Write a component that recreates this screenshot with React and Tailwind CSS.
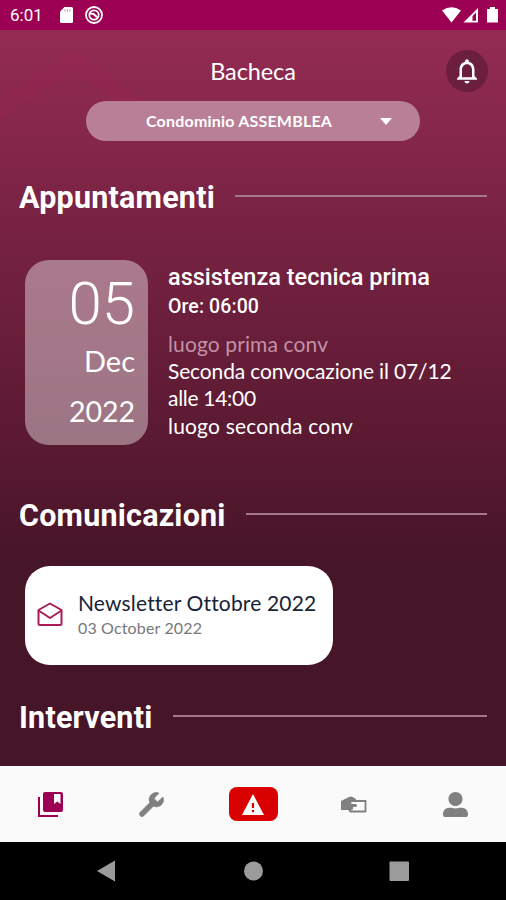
import React from 'react';
import { MdNotificationsNone } from 'react-icons/md';
import { FaUserAlt } from 'react-icons/fa';
import { Wrench } from 'lucide-react';

function StatusBar() {
  return (
    <div className="flex h-[30px] shrink-0 items-center justify-between bg-[#9c0052] pr-2 pl-[10px] text-white">
      <div className="flex items-center">
        <span className="w-[50px] pt-px font-['Roboto',sans-serif] text-[17px] leading-none">6:01</span>
        <svg className="h-4 w-[13px]" viewBox="0 0 13 16" fill="currentColor">
          <path d="M4.500 0H11.500Q13 0 13 1.500V14.500Q13 16 11.500 16H1.500Q0 16 0 14.500V4.500Z" />
          <path d="M5 2.500v2M7.500 2.500v2M10 2.500v2" stroke="#c9729f" strokeWidth="1" />
        </svg>
        <svg className="ml-3 h-[18px] w-[18px]" viewBox="0 0 18 18" fill="none" stroke="currentColor">
          <circle cx="9" cy="9" r="8" strokeWidth="1.800" />
          <circle cx="9" cy="9" r="4.700" strokeWidth="1.700" />
          <path d="M5 7.500L8.500 8L13 12" strokeWidth="2" />
        </svg>
      </div>
      <svg className="h-4 w-14" viewBox="0 0 56 16" fill="currentColor">
        <path d="M0 3.500Q9.500 -3 19 3.500L9.500 15.500Z" />
        <path d="M21.500 15.500L36 1V15.500Z" />
        <path d="M30.500 9L34 5.500V13.800H30.500Z" fill="#9c0052" />
        <path d="M45 2H48V0H53V2H56V15.500H45Z" />
      </svg>
    </div>
  );
}

function SectionTitle({ children, className }) {
  return (
    <div className="flex h-[35px] items-center pr-[19px] pl-[19px]">
      <h2 className={`shrink-0 pb-px font-['Roboto',sans-serif] text-[30.500px] leading-[34px] font-bold tracking-[0.2px] ${className}`}>
        {children}
      </h2>
      <div className="mb-[5px] h-[2px] flex-1 bg-[#a3788a]"></div>
    </div>
  );
}

function Appointment() {
  return (
    <div className="mt-11 flex pl-[25px]">
      <div className="h-[185px] w-[123px] shrink-0 rounded-[24px] bg-white/40 pr-[13px] text-right">
        <div className="mt-3 font-['Roboto',sans-serif] text-[60px] leading-[64px] font-light">05</div>
        <div className="mt-1 text-[29px] leading-[42px]">Dec</div>
        <div className="mt-2 text-[28.500px] leading-[42px]">2022</div>
      </div>
      <div className="pl-5">
        <h3 className="mt-[3px] font-['Roboto',sans-serif] text-[23.500px] leading-[28px] font-medium whitespace-nowrap">
          assistenza tecnica prima
        </h3>
        <p className="mt-px font-['Roboto',sans-serif] text-[19.500px] leading-[30px] font-medium tracking-[0.1px]">Ore: 06:00</p>
        <div className="mt-[8px] text-[21px] leading-[27.200px] whitespace-nowrap">
          <p className="tracking-[0.12px] text-[#c391a7]">luogo prima conv</p>
          <p className="tracking-[-0.15px]">Seconda convocazione il 07/12</p>
          <p className="tracking-[-0.3px]">alle 14:00</p>
          <p className="tracking-[0.18px]">luogo seconda conv</p>
        </div>
      </div>
    </div>
  );
}

function NewsCard() {
  return (
    <div className="mt-8 ml-[25px] flex h-[99px] w-[308px] items-center rounded-[25px] bg-white">
      <svg className="mb-1 ml-3 h-6 w-[26px] shrink-0" viewBox="0 0 26 24" fill="none" stroke="#a91b57" strokeWidth="2" strokeLinejoin="round">
        <path d="M1.500 8L13 1.500L24.500 8V21.500Q24.500 23 23 23H3Q1.500 23 1.500 21.500Z" />
        <path d="M1.500 8.500L13 16L24.500 8.500" />
      </svg>
      <div className="mb-px ml-[15px] whitespace-nowrap">
        <p className="text-[21px] leading-[26px] tracking-[0.16px] text-[#172337]">Newsletter Ottobre 2022</p>
        <p className="text-[16px] leading-6 tracking-[0.15px] text-[#77777b]">03 October 2022</p>
      </div>
    </div>
  );
}

function BottomTabs() {
  return (
    <nav className="flex h-[76px] shrink-0 items-center bg-[#fafafa] text-[#808080]">
      <div className="flex flex-1 justify-center">
        <svg className="h-[25px] w-[25px]" viewBox="0 0 25 25" fill="#9c0052">
          <path d="M1 5V24H20" fill="none" stroke="#9c0052" strokeWidth="2" />
          <path d="M7 0H23Q25 0 25 2V18Q25 20 23 20H7Q5 20 5 18V2Q5 0 7 0Z" />
          <path d="M16 2H22.500V12L19.250 9.500L16 12Z" fill="#fafafa" />
        </svg>
      </div>
      <div className="flex flex-1 justify-center">
        <Wrench size={29} strokeWidth={0.5} fill="currentColor" />
      </div>
      <div className="flex flex-1 justify-center">
        <div className="flex h-[34px] w-[49px] items-center justify-center rounded-lg bg-[#d90000]">
          <svg className="h-[21px] w-[22px]" viewBox="0 0 22 21" fill="none">
            <path d="M11 0L22 21H0Z" fill="#fff" />
            <path d="M11 9v5M11 16v2.200" stroke="#d90000" strokeWidth="2.200" />
          </svg>
        </div>
      </div>
      <div className="flex flex-1 justify-center">
        <svg className="h-[17px] w-[26px]" viewBox="0 0 26 17" fill="currentColor">
          <path d="M0 5L8 1Q10 0 12 1.200L15 3V16H9L7 14H0Z" />
          <path d="M9.500 5H24.500V15.500H9.500Z" fill="#fafafa" stroke="currentColor" strokeWidth="1.800" />
          <path d="M5 8H14.500Q16 8 16 9.500T14.500 11H12V13.500H5Z" />
        </svg>
      </div>
      <div className="flex flex-1 justify-center">
        <FaUserAlt className="text-[25px]" />
      </div>
    </nav>
  );
}

function App() {
  return (
    <div className="flex h-[900px] w-[506px] flex-col overflow-hidden font-['Lato',sans-serif] text-white">
      <StatusBar />
      <main className="relative h-[736px] shrink-0 bg-linear-to-b from-[#942b53] from-0% via-[#581930] via-58% to-[#471528] to-72%">
        <svg className="absolute top-0 left-0 h-40 w-40" viewBox="0 0 160 160" fill="none" stroke="#a02355" strokeOpacity=".25" strokeWidth="18">
          <path d="M-10 85L75 30L150 88" />
        </svg>
        <header className="relative flex h-[111px] flex-col items-center">
          <h1 className="mt-[26px] text-[23.500px] leading-[30px] tracking-[-0.1px]">Bacheca</h1>
          <button className="mt-[15px] flex h-10 w-[334px] items-center rounded-full bg-[#b87f97] pl-[60px] text-[16px] font-bold tracking-[0.2px]">
            <span className="w-[234px] text-left whitespace-nowrap">Condominio ASSEMBLEA</span>
            <svg className="h-[7px] w-3" viewBox="0 0 12 7" fill="currentColor">
              <path d="M0 0H12L6 7Z" />
            </svg>
          </button>
          <div className="absolute top-5 right-[18px] flex h-[42px] w-[42px] items-center justify-center rounded-full bg-[#6b1e3e]">
            <MdNotificationsNone className="text-[30px]" />
          </div>
        </header>
        <div className="mt-[40px]">
          <SectionTitle className="w-[216px]">Appuntamenti</SectionTitle>
        </div>
        <Appointment />
        <div className="mt-[54px]">
          <SectionTitle className="w-[227px]">Comunicazioni</SectionTitle>
        </div>
        <NewsCard />
        <div className="mt-9">
          <SectionTitle className="w-[154px]">Interventi</SectionTitle>
        </div>
      </main>
      <BottomTabs />
      <div className="flex h-[58px] shrink-0 items-center bg-black text-[#9b9b9b]">
        <svg className="h-full w-full" viewBox="0 0 506 58" fill="currentColor">
          <path d="M97 29L115 18.500V39.500Z" />
          <circle cx="253.500" cy="29" r="9.500" />
          <rect x="389.500" y="19.500" width="19.500" height="19.500" rx="1" />
        </svg>
      </div>
    </div>
  );
}

export default App;
